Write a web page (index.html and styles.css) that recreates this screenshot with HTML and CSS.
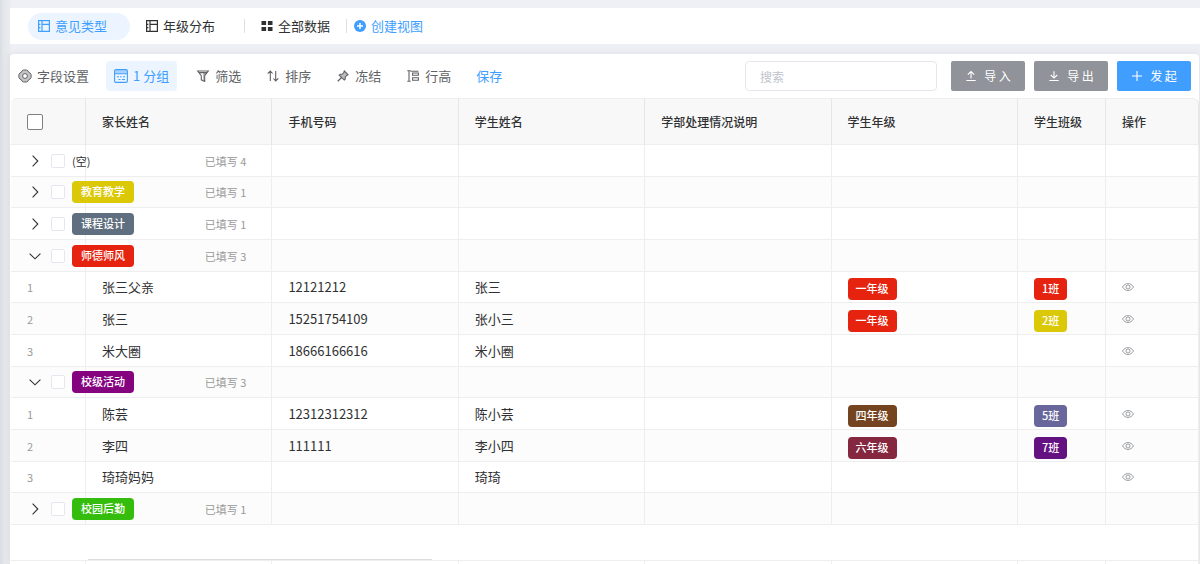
FILE: index.html
```html
<!DOCTYPE html>
<html lang="zh-CN">
<head>
    <meta charset="UTF-8">
    <meta name="viewport" content="width=device-width, initial-scale=1.0">
    <title>意见类型</title>
    <link rel="stylesheet" href="styles.css">
</head>
<body>
    <!-- 图标 -->
    <svg class="symbols" aria-hidden="true">
        <symbol id="i-view" viewBox="0 0 12 12"><path d="M.6.6h10.8v10.8H.6zM4 .6v10.8M4 4.300h7.4M.6 4.300H2.400M.6 7.700H2.400" fill="none" stroke="currentColor" stroke-width="1.2"/></symbol>
        <symbol id="i-grid" viewBox="0 0 12 12"><path d="M.5 1h4.6v4H.5zM6.9 1h4.6v4H6.9zM.5 7h4.6v4H.5zM6.9 7h4.6v4H6.9z" fill="currentColor"/></symbol>
        <symbol id="i-add" viewBox="0 0 12 12"><circle cx="6" cy="6" r="6" fill="currentColor"/><path d="M6 3v6M3 6h6" stroke="#fff" stroke-width="1.5"/></symbol>
        <symbol id="i-gear" viewBox="0 0 14 14"><path d="M4.2 1.6 5.5 1h3l1.3.6.7 1.5 1.6.9 1 1.500v3l-1 1.5-1.6.9-.7 1.5-1.3.6h-3l-1.3-.6-.7-1.5-1.6-.9-1-1.5v-3l1-1.5 1.6-.9z" fill="#c4c4c4" stroke="currentColor"/><circle cx="7" cy="7" r="2.4" fill="#fff" stroke="currentColor"/></symbol>
        <symbol id="i-group" viewBox="0 0 14 14"><path d="M1 1h12v3.6H1z" fill="#a8d2ff"/><rect x=".6" y=".6" width="12.8" height="12.8" rx="1.4" fill="none" stroke="currentColor" stroke-width="1.1"/><path d="M.6 4.8h12.8" stroke="currentColor" stroke-width="1.1"/><path d="M3 7.8h2M6 7.8h1.5M9 7.8h2M4.5 10.5h2M8 10.5h3" stroke="currentColor"/></symbol>
        <symbol id="i-filter" viewBox="0 0 12 12"><path d="M6.2 2.500h3.400L7.500 5.500v5H6.200z" fill="#aaa"/><path d="M.7 1h10.6L7.700 5.700v5.800L4.300 9.800V5.700zM2 2.600h8" fill="none" stroke="currentColor" stroke-width="1.1"/></symbol>
        <symbol id="i-sort" viewBox="0 0 12 12"><path d="M3.3 11V1M.7 3.7 3.3 1l2.3 2.5M8.7 1v10M11.3 8.3 8.7 11 6.4 8.5" fill="none" stroke="currentColor" stroke-width="1.1"/></symbol>
        <symbol id="i-pin" viewBox="0 0 12 12"><path d="M7.3 1 11 4.7l-1.2.7-1.6 1.7.1 2-1 1L2.2 5.2l1-1 2 .1 1.6-1.8z" fill="#bbb" stroke="currentColor" stroke-width="1.1"/><path d="M4.6 7.5.8 11.2" stroke="currentColor" stroke-width="1.3"/></symbol>
        <symbol id="i-height" viewBox="0 0 12 12"><path d="M.3.7h3.4M2 .7v10.6M.3 11.3h3.400M3.700 1.300h7.700M5.600 3h5.800v2.200H5.600zM5.600 7.700h5.800v2.600H5.600z" fill="none" stroke="currentColor" stroke-width="1.1"/></symbol>
        <symbol id="i-import" viewBox="0 0 12 12"><path d="M6 8.4V1.6M2.8 4.6 6 1.5l3.2 3.1M1.3 10.5h9.4" fill="none" stroke="currentColor" stroke-width="1.1"/></symbol>
        <symbol id="i-export" viewBox="0 0 12 12"><path d="M6 1.2V8M2.8 5 6 8.1 9.2 5M1.3 10.5h9.4" fill="none" stroke="currentColor" stroke-width="1.1"/></symbol>
        <symbol id="i-plus" viewBox="0 0 12 12"><path d="M6 1v10M1 6h10" stroke="currentColor" stroke-width="1.1"/></symbol>
        <symbol id="i-arrow" viewBox="0 0 14 14"><path d="M4.6 1.6 9.8 7l-5.2 5.4" fill="none" stroke="currentColor" stroke-width="1.1"/></symbol>
        <symbol id="i-eye" viewBox="0 0 12 12"><path d="M.5 6C3.2 1.4 8.8 1.4 11.5 6 8.8 10.6 3.2 10.6.5 6z" fill="none" stroke="currentColor" stroke-width=".9"/><circle cx="6" cy="6" r="2" fill="none" stroke="currentColor" stroke-width=".9"/></symbol>
    </svg>

    <nav class="tabs">
        <a class="tab active" href="#"><svg class="icon"><use href="#i-view"/></svg>意见类型</a>
        <a class="tab" href="#"><svg class="icon"><use href="#i-view"/></svg>年级分布</a>
        <span class="divider"></span>
        <a class="tab tab-all" href="#"><svg class="icon"><use href="#i-grid"/></svg>全部数据</a>
        <span class="divider"></span>
        <button class="create" type="button"><svg class="icon"><use href="#i-add"/></svg>创建视图</button>
    </nav>

    <main class="panel">
        <div class="toolbar">
            <button class="tool" type="button"><svg class="icon icon-big"><use href="#i-gear"/></svg>字段设置</button>
            <button class="tool active" type="button"><svg class="icon icon-big"><use href="#i-group"/></svg>1 分组</button>
            <button class="tool" type="button"><svg class="icon"><use href="#i-filter"/></svg>筛选</button>
            <button class="tool" type="button"><svg class="icon"><use href="#i-sort"/></svg>排序</button>
            <button class="tool" type="button"><svg class="icon"><use href="#i-pin"/></svg>冻结</button>
            <button class="tool" type="button"><svg class="icon"><use href="#i-height"/></svg>行高</button>
            <button class="tool save" type="button">保存</button>
            <div class="actions">
                <input class="search" type="text" placeholder="搜索" aria-label="搜索">
                <button class="btn" type="button"><svg class="icon"><use href="#i-import"/></svg>导 入</button>
                <button class="btn" type="button"><svg class="icon"><use href="#i-export"/></svg>导 出</button>
                <button class="btn primary" type="button"><svg class="icon"><use href="#i-plus"/></svg>发 起</button>
            </div>
        </div>

        <table class="grid">
            <colgroup>
                <col class="col-check"><col><col><col><col><col><col class="col-class"><col class="col-op">
            </colgroup>
            <thead>
                <tr>
                    <th><input class="check-all" type="checkbox" aria-label="全选"></th>
                    <th>家长姓名</th><th>手机号码</th><th>学生姓名</th><th>学部处理情况说明</th><th>学生年级</th><th>学生班级</th><th>操作</th>
                </tr>
            </thead>
            <tbody>
                <tr>
                    <td class="head"><div class="group"><button class="toggle" type="button" aria-label="展开"><svg><use href="#i-arrow"/></svg></button><input class="check" type="checkbox" aria-label="空"><span class="none">(空)</span></div></td>
                    <td class="count">已填写 4</td><td></td><td></td><td></td><td></td><td></td><td></td>
                </tr>
                <tr>
                    <td class="head"><div class="group"><button class="toggle" type="button" aria-label="展开"><svg><use href="#i-arrow"/></svg></button><input class="check" type="checkbox" aria-label="教育教学"><span class="tag yellow">教育教学</span></div></td>
                    <td class="count">已填写 1</td><td></td><td></td><td></td><td></td><td></td><td></td>
                </tr>
                <tr>
                    <td class="head"><div class="group"><button class="toggle" type="button" aria-label="展开"><svg><use href="#i-arrow"/></svg></button><input class="check" type="checkbox" aria-label="课程设计"><span class="tag slate">课程设计</span></div></td>
                    <td class="count">已填写 1</td><td></td><td></td><td></td><td></td><td></td><td></td>
                </tr>
                <tr>
                    <td class="head"><div class="group"><button class="toggle open" type="button" aria-label="收起"><svg><use href="#i-arrow"/></svg></button><input class="check" type="checkbox" aria-label="师德师风"><span class="tag red">师德师风</span></div></td>
                    <td class="count">已填写 3</td><td></td><td></td><td></td><td></td><td></td><td></td>
                </tr>
                <tr>
                    <td class="num">1</td><td>张三父亲</td><td>12121212</td><td>张三</td><td></td>
                    <td class="tags"><span class="tag red">一年级</span></td><td class="tags"><span class="tag red">1班</span></td>
                    <td><button class="eye" type="button" aria-label="查看"><svg class="icon"><use href="#i-eye"/></svg></button></td>
                </tr>
                <tr>
                    <td class="num">2</td><td>张三</td><td>15251754109</td><td>张小三</td><td></td>
                    <td class="tags"><span class="tag red">一年级</span></td><td class="tags"><span class="tag yellow">2班</span></td>
                    <td><button class="eye" type="button" aria-label="查看"><svg class="icon"><use href="#i-eye"/></svg></button></td>
                </tr>
                <tr>
                    <td class="num">3</td><td>米大圈</td><td>18666166616</td><td>米小圈</td><td></td><td></td><td></td>
                    <td><button class="eye" type="button" aria-label="查看"><svg class="icon"><use href="#i-eye"/></svg></button></td>
                </tr>
                <tr>
                    <td class="head"><div class="group"><button class="toggle open" type="button" aria-label="收起"><svg><use href="#i-arrow"/></svg></button><input class="check" type="checkbox" aria-label="校级活动"><span class="tag purple">校级活动</span></div></td>
                    <td class="count">已填写 3</td><td></td><td></td><td></td><td></td><td></td><td></td>
                </tr>
                <tr>
                    <td class="num">1</td><td>陈芸</td><td>12312312312</td><td>陈小芸</td><td></td>
                    <td class="tags"><span class="tag brown">四年级</span></td><td class="tags"><span class="tag indigo">5班</span></td>
                    <td><button class="eye" type="button" aria-label="查看"><svg class="icon"><use href="#i-eye"/></svg></button></td>
                </tr>
                <tr>
                    <td class="num">2</td><td>李四</td><td>111111</td><td>李小四</td><td></td>
                    <td class="tags"><span class="tag wine">六年级</span></td><td class="tags"><span class="tag violet">7班</span></td>
                    <td><button class="eye" type="button" aria-label="查看"><svg class="icon"><use href="#i-eye"/></svg></button></td>
                </tr>
                <tr>
                    <td class="num">3</td><td>琦琦妈妈</td><td></td><td>琦琦</td><td></td><td></td><td></td>
                    <td><button class="eye" type="button" aria-label="查看"><svg class="icon"><use href="#i-eye"/></svg></button></td>
                </tr>
                <tr>
                    <td class="head"><div class="group"><button class="toggle" type="button" aria-label="展开"><svg><use href="#i-arrow"/></svg></button><input class="check" type="checkbox" aria-label="校园后勤"><span class="tag green">校园后勤</span></div></td>
                    <td class="count">已填写 1</td><td></td><td></td><td></td><td></td><td></td><td></td>
                </tr>
            </tbody>
            <tfoot>
                <!-- 横向滚动条 -->
                <tr class="scroll"><td colspan="8"><div class="thumb"></div></td></tr>
                <tr><td></td><td></td><td></td><td></td><td></td><td></td><td></td><td></td></tr>
            </tfoot>
        </table>
    </main>
</body>
</html>
```
FILE: styles.css
```css
*{
    box-sizing: border-box;
}
html{
    height: 100%;
    overflow: hidden;
}
body{
    height: 100%;
    margin: 0;
    padding: 8px 0 0 10px;
    display: flex;
    flex-direction: column;
    gap: 10px;
    overflow: hidden;
    background: linear-gradient(to right, #d9dde2 0, #e4e7eb 4px, #e9ebef 10px, #eff0f5 11px);
    font-family: "Noto Sans CJK SC", sans-serif;
    font-size: 13px;
    line-height: 20px;
    color: #303133;
}
button, input{
    margin: 0;
    font-family: inherit;
    font-size: inherit;
    line-height: inherit;
}
button{
    padding: 0;
    border: none;
    background: none;
    color: inherit;
    cursor: pointer;
}
.symbols{
    position: absolute;
    width: 0;
    height: 0;
}
.icon{
    width: 12px;
    height: 12px;
    flex: none;
}

/* 视图标签 */
.tabs{
    flex: none;
    height: 36px;
    padding-left: 18px;
    display: flex;
    align-items: center;
    gap: 6px;
    background: #fff;
}
.tab, .create{
    height: 27px;
    display: flex;
    align-items: center;
    gap: 5px;
    text-decoration: none;
    color: #303133;
    white-space: nowrap;
}
.tab{
    padding: 0 23px 0 10px;
    border-radius: 14px;
}
.tab.active{
    background: #ecf5ff;
    color: #409eff;
}
.tab-all{
    padding-right: 10px;
}
.create{
    padding-left: 1px;
    color: #409eff;
}
.divider{
    width: 1px;
    height: 14px;
    background: #dcdfe6;
}

/* 工具栏 */
.panel{
    flex: 1;
    min-height: 0;
    overflow: hidden;
    margin-right: 1px;
    border-radius: 4px 4px 0 0;
    background: #fff;
    box-shadow: 0 0 8px rgba(0, 0, 0, 0.08);
}
.toolbar{
    height: 44px;
    padding-right: 8px;
    display: flex;
    align-items: center;
    gap: 9px;
}
.tool{
    height: 30px;
    padding: 0 8px;
    display: flex;
    align-items: center;
    gap: 5px;
    border-radius: 4px;
    color: #606266;
    white-space: nowrap;
}
.tool .icon{
    width: 14px;
}
.tool .icon-big{
    height: 14px;
}
.tool.active{
    margin-right: 2px;
    background: #ecf5ff;
    color: #409eff;
}
.tool.save{
    color: #409eff;
}
.actions{
    flex: 1;
    display: flex;
    justify-content: flex-end;
    gap: 9px;
}
.search{
    width: 192px;
    height: 30px;
    margin-right: 5px;
    padding: 0 14px;
    border: 1px solid #e4e7ed;
    border-radius: 4px;
    font-size: 12px;
    outline: none;
}
.search::placeholder{
    color: #c0c4cc;
}
.btn{
    min-width: 74px;
    height: 30px;
    display: flex;
    align-items: center;
    justify-content: center;
    gap: 7px;
    border-radius: 2px;
    background: #909399;
    color: #fff;
    font-size: 12px;
}
.btn.primary{
    background: #409eff;
}

/* 表格 */
.grid{
    width: 100%;
    padding-left: 1px;
    table-layout: fixed;
    border-collapse: separate;
    border-spacing: 0;
}
.col-check{
    width: 75px;
}
.col-class{
    width: 88px;
}
.col-op{
    width: 93px;
}
.grid th, .grid td{
    padding: 0 0 0 16px;
    border-right: 1px solid #eee;
    border-bottom: 1px solid #eee;
    text-align: left;
    white-space: nowrap;
}
.grid th{
    height: 47px;
    border-top: 1px solid #eee;
    border-right-color: #e6e6e6;
    background: #f8f8f8;
    font-size: 12px;
    font-weight: 500;
}
.grid th:first-child{
    border-top-left-radius: 6px;
}
.grid th:last-child{
    border-top-right-radius: 6px;
}
.grid tr{
    height: 32px;
}
.grid tbody tr:nth-child(3n+2){
    height: 31px;
}
.grid tbody tr:nth-child(even){
    background: #fcfcfc;
}
.grid .num{
    color: #999;
    font-size: 11px;
}
.grid .count{
    padding-right: 25px;
    text-align: right;
    color: #999;
    font-size: 11px;
}
.grid .tags{
    padding-top: 4px;
}
.check, .check-all{
    appearance: none;
    display: block;
    flex: none;
    width: 14px;
    height: 14px;
    border: 1px solid #e4e7ed;
    border-radius: 2px;
    background: #fff;
}
.check-all{
    width: 16px;
    height: 16px;
    border-color: #808080;
}
/* 分组名比第一列宽，允许超出到下一列 */
.group{
    width: 50px;
    display: flex;
    align-items: center;
    gap: 7px;
}
.toggle{
    width: 17px;
    height: 16px;
    flex: none;
    display: flex;
    align-items: center;
}
.toggle svg{
    width: 14px;
    height: 14px;
    margin-left: 1px;
}
.toggle.open svg{
    transform: rotate(90deg);
}
.none{
    font-size: 11px;
}
.tag{
    display: block;
    flex: none;
    width: max-content;
    height: 22px;
    padding: 0 8px;
    border-radius: 4px;
    color: #fff;
    font-size: 11px;
    line-height: 21px;
    font-weight: 500;
}
.group .tag{
    padding: 0 9px;
}
.yellow{ background: #dbc908; }
.slate{ background: #5f6f80; }
.red{ background: #e5230f; }
.purple{ background: #85037f; }
.green{ background: #35bd0d; }
.brown{ background: #744420; }
.indigo{ background: #68669a; }
.wine{ background: #84273f; }
.violet{ background: #641182; }
.eye{
    display: flex;
    color: #909399;
}
.grid .scroll{
    height: 36px;
}
.grid .scroll td{
    padding: 0;
    vertical-align: bottom;
}
.thumb{
    width: 29%;
    height: 1px;
    margin-left: 77px;
    background: #ddd;
}
```
